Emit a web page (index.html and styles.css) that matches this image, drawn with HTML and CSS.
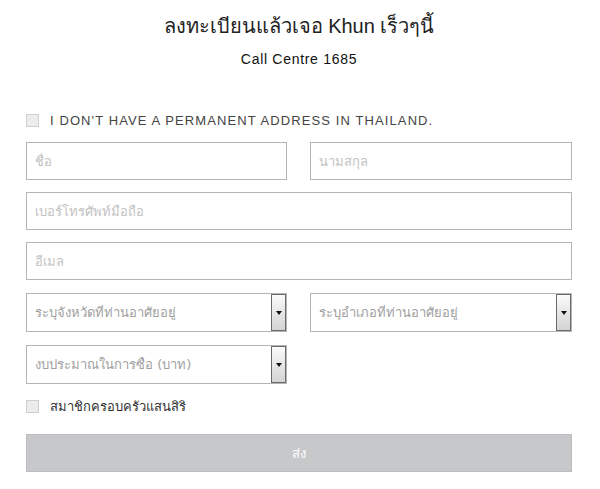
FILE: index.html
```html
<!DOCTYPE html>
<html lang="th">

<head>
  <meta charset="UTF-8">
  <meta content="width=device-width, initial-scale=1.0" name="viewport">
  <title>Register</title>
  <link rel="stylesheet" href="styles.css">
</head>

<body>

<div class="register">
  <div class="register-heading">
    <h2>ลงทะเบียนแล้วเจอ Khun เร็วๆนี้</h2>
    <p>Call Centre 1685</p>
  </div>

  <form class="register-form">
    <label class="check-row check-upper">
      <span class="check-box"></span>
      I DON'T HAVE A PERMANENT ADDRESS IN THAILAND.
    </label>

    <div class="form-row">
      <input class="field" placeholder="ชื่อ" type="text">
      <input class="field" placeholder="นามสกุล" type="text">
    </div>

    <input class="field" placeholder="เบอร์โทรศัพท์มือถือ" type="text">
    <input class="field" placeholder="อีเมล" type="text">

    <div class="form-row select-row">
      <div class="select-box">
        <select class="select-field">
          <option>ระบุจังหวัดที่ท่านอาศัยอยู่</option>
        </select>
        <span class="select-arrow"></span>
      </div>
      <div class="select-box">
        <select class="select-field">
          <option>ระบุอำเภอที่ท่านอาศัยอยู่</option>
        </select>
        <span class="select-arrow"></span>
      </div>
    </div>

    <div class="form-row select-row">
      <div class="select-box">
        <select class="select-field">
          <option>งบประมาณในการซื้อ (บาท)</option>
        </select>
        <span class="select-arrow"></span>
      </div>
    </div>

    <label class="check-row check-family">
      <span class="check-box"></span>
      สมาชิกครอบครัวแสนสิริ
    </label>

    <button class="btn-submit" type="button">ส่ง</button>
  </form>
</div>

</body>
</html>
```

FILE: styles.css
```css
* {
  margin: 0;
  padding: 0;
  box-sizing: border-box;
}

body {
  background-color: #fff;
  font-family: 'Liberation Sans', Arial, sans-serif;
  color: #333;
}

.register {
  width: 546px;
  margin: 0 26px;
  padding-top: 13px;
}

.register-heading {
  text-align: center;
}

.register-heading h2 {
  font-size: 20px;
  font-weight: normal;
  color: #222;
  line-height: 26px;
}

.register-heading p {
  font-size: 14px;
  letter-spacing: 0.7px;
  color: #111;
  margin-top: 12px;
  line-height: 16px;
}

.register-form {
  display: flex;
  flex-direction: column;
  gap: 12px;
  margin-top: 45px;
}

.form-row {
  display: grid;
  grid-template-columns: 261px 262px;
  column-gap: 23px;
}

.select-row {
  margin-top: 1px;
}

.check-row {
  display: flex;
  align-items: center;
  gap: 11px;
  font-size: 13px;
  color: #444;
  height: 16px;
}

.check-upper {
  letter-spacing: 1.1px;
  margin-bottom: 2px;
}

.check-family {
  margin-top: 2px;
  color: #333;
}

.check-box {
  width: 13px;
  height: 13px;
  background-color: #ececec;
  border: 1px solid #cfcfcf;
}

.field {
  height: 38px;
  width: 100%;
  border: 1px solid #b5b5b5;
  padding: 0 8px;
  font-family: Tahoma, 'DejaVu Sans', sans-serif;
  font-size: 13px;
  color: #555;
  outline: none;
}

.field::placeholder {
  color: #c2c2c2;
}

.select-box {
  display: flex;
  height: 39px;
  border: 1px solid #b5b5b5;
}

.select-field {
  flex: 1;
  appearance: none;
  border: none;
  background: #fff;
  padding: 0 8px;
  font-family: Tahoma, 'DejaVu Sans', sans-serif;
  font-size: 13px;
  color: #a0a0a0;
  outline: none;
}

.select-arrow {
  width: 15px;
  border: 1px solid #6a6a6a;
  background: linear-gradient(#fafafa, #d4d4d4);
  display: flex;
  align-items: center;
  justify-content: center;
}

.select-arrow::after {
  content: '';
  border-left: 3px solid transparent;
  border-right: 3px solid transparent;
  border-top: 4px solid #111;
}

.btn-submit {
  height: 38px;
  border: 1px solid #bdbdbf;
  background-color: #c7c8ca;
  color: #fff;
  font-family: Tahoma, 'DejaVu Sans', sans-serif;
  font-size: 13px;
  margin-top: 8px;
}
```
